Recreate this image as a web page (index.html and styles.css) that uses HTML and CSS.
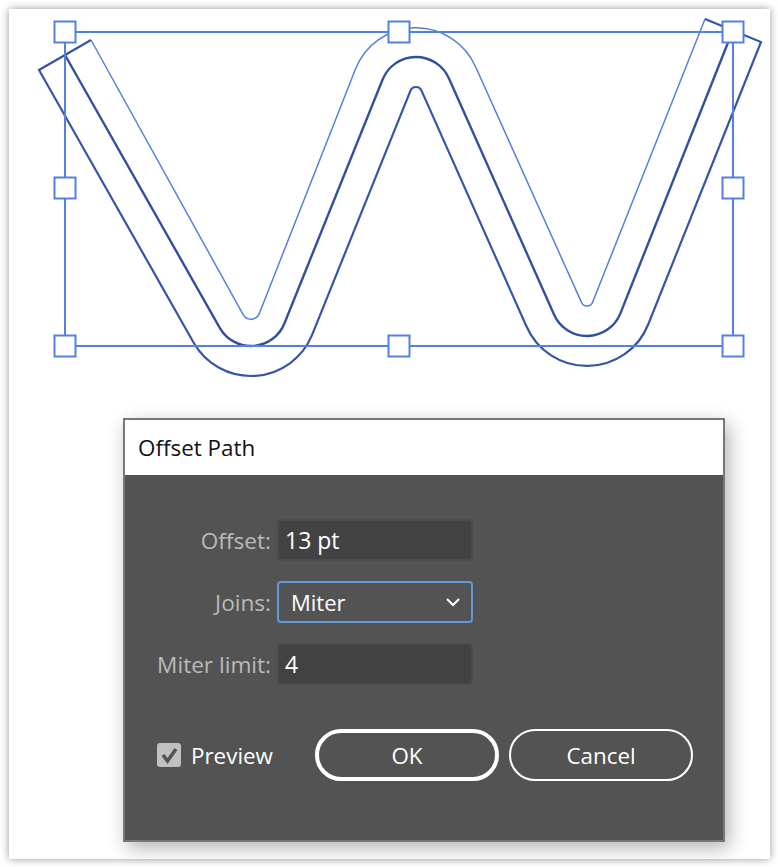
FILE: index.html
```html
<!DOCTYPE html>
<html lang="en">
<head>
<meta charset="UTF-8">
<meta name="viewport" content="width=device-width, initial-scale=1.0">
<title>Offset Path</title>
<link rel="stylesheet" href="styles.css">
</head>
<body>
    <div class="card">
        <svg class="artboard" viewBox="9 9 761 400" width="761" height="400">
            <!-- offset outline -->
            <path class="offset-top" d="M91 40 L243 314.4 A9 9 0 0 0 259.4 313.3 L355.5 69.1 A65 65 0 0 1 475.8 67.3 L581.5 302.4 A6 6 0 0 0 592.6 302.2 L705 19"/>
            <path class="offset-low" d="M705 19 L761 42 L648.4 324 A66 66 0 0 1 526.3 326 L421.5 90.6 A6 6 0 0 0 410.4 90.8 L312.4 334.2 A66 66 0 0 1 193.4 342.2 L39 70 L91 40"/>
            <!-- original path -->
            <path class="original" d="M65 55 L219.6 327.6 A36 36 0 0 0 284.5 323.2 L382.5 79.8 A36 36 0 0 1 449.1 78.8 L553.9 314.2 A36 36 0 0 0 620.5 313.1 L733 30"/>
            <!-- bounding box -->
            <rect class="bbox" x="65" y="32" width="668" height="314"/>
            <rect class="handle" x="54.5" y="21.5" width="21" height="21"/>
            <rect class="handle" x="388.5" y="21.5" width="21" height="21"/>
            <rect class="handle" x="722.5" y="21.5" width="21" height="21"/>
            <rect class="handle" x="54.5" y="177.5" width="21" height="21"/>
            <rect class="handle" x="722.5" y="177.5" width="21" height="21"/>
            <rect class="handle" x="54.5" y="335.5" width="21" height="21"/>
            <rect class="handle" x="388.5" y="335.5" width="21" height="21"/>
            <rect class="handle" x="722.5" y="335.5" width="21" height="21"/>
        </svg>

        <div class="dialog">
            <div class="dialog-title">Offset Path</div>
            <div class="dialog-body">
                <div class="fields">
                    <label class="field-label" for="offset">Offset:</label>
                    <input class="field-input" id="offset" type="text" value="13 pt">
                    <div class="field-label">Joins:</div>
                    <div class="field-select">
                        <span>Miter</span>
                        <svg class="chevron" viewBox="0 0 16 10" width="16" height="10">
                            <path d="M2 2 L8 8 L14 2"/>
                        </svg>
                    </div>
                    <label class="field-label" for="limit">Miter limit:</label>
                    <input class="field-input" id="limit" type="text" value="4">
                </div>
                <div class="footer">
                    <div class="preview">
                        <span class="checkbox">
                            <svg viewBox="0 0 24 24" width="24" height="24">
                                <path d="M6 12 L10.5 18 L19 6"/>
                            </svg>
                        </span>
                        Preview
                    </div>
                    <div class="buttons">
                        <button type="button" class="btn btn-primary">OK</button>
                        <button type="button" class="btn">Cancel</button>
                    </div>
                </div>
            </div>
        </div>
    </div>
</body>
</html>
```
FILE: styles.css
```css
* {
  box-sizing: border-box;
}
body {
  margin: 0;
  padding: 9px 8px 8px 9px;
  background-color: #ffffff;
  font-family: "Open Sans", "Noto Sans", sans-serif;
}
.card {
  display: flex;
  flex-direction: column;
  width: 761px;
  height: 850px;
  background-color: #ffffff;
  box-shadow: 0 0 8px rgba(0, 0, 0, 0.4);
}
.artboard {
  display: block;
  flex: none;
}
.artboard path {
  fill: none;
}
.offset-top {
  stroke: #5580dc;
  stroke-width: 1.5;
}
.offset-low {
  stroke: #3755a8;
  stroke-width: 2.2;
}
.original {
  stroke: #33509f;
  stroke-width: 2.4;
}
.bbox {
  fill: none;
  stroke: #5580e0;
  stroke-width: 2;
}
.handle {
  fill: #ffffff;
  stroke: #5580e0;
  stroke-width: 2;
}
.dialog {
  width: 602px;
  height: 424px;
  margin: 9px 0 0 114px;
  border: 2px solid #787878;
  background-color: #535353;
  box-shadow: 4px 6px 18px rgba(0, 0, 0, 0.3);
}
.dialog-title {
  height: 55px;
  padding-left: 13px;
  background-color: #ffffff;
  color: #111111;
  font-size: 22.4px;
  line-height: 55px;
}
.dialog-body {
  padding: 44px 30px 0 32px;
}
.fields {
  display: grid;
  grid-template-columns: 114px 196px;
  grid-auto-rows: 42px;
  gap: 20px 6px;
}
.field-label {
  align-self: center;
  text-align: right;
  white-space: nowrap;
  color: #bababa;
  font-size: 22.6px;
}
.field-input {
  width: 100%;
  height: 100%;
  padding: 0 6px;
  border: 2px solid #4c4c4c;
  border-radius: 4px;
  background-color: #424242;
  color: #ffffff;
  font-family: inherit;
  font-size: 23px;
  outline: none;
}
.field-select {
  display: flex;
  align-items: center;
  justify-content: space-between;
  padding: 0 10px 0 12px;
  border: 2px solid #5b9bd8;
  border-radius: 4px;
  color: #ffffff;
  font-size: 22px;
}
.chevron path {
  fill: none;
  stroke: #ffffff;
  stroke-width: 2;
}
.footer {
  display: flex;
  align-items: center;
  justify-content: space-between;
  margin-top: 44px;
}
.preview {
  display: flex;
  align-items: center;
  gap: 10px;
  color: #ffffff;
  font-size: 22.4px;
}
.checkbox {
  display: block;
  width: 24px;
  height: 24px;
  border-radius: 3px;
  background-color: #c0c0c0;
}
.checkbox svg {
  display: block;
}
.checkbox path {
  fill: none;
  stroke: #535353;
  stroke-width: 3.5;
}
.buttons {
  display: flex;
  gap: 10px;
}
.btn {
  width: 184px;
  height: 52px;
  padding: 0;
  border: 2px solid #ffffff;
  border-radius: 26px;
  background-color: transparent;
  color: #ffffff;
  font-family: inherit;
  font-size: 22.4px;
}
.btn-primary {
  border-width: 4px;
}
```
